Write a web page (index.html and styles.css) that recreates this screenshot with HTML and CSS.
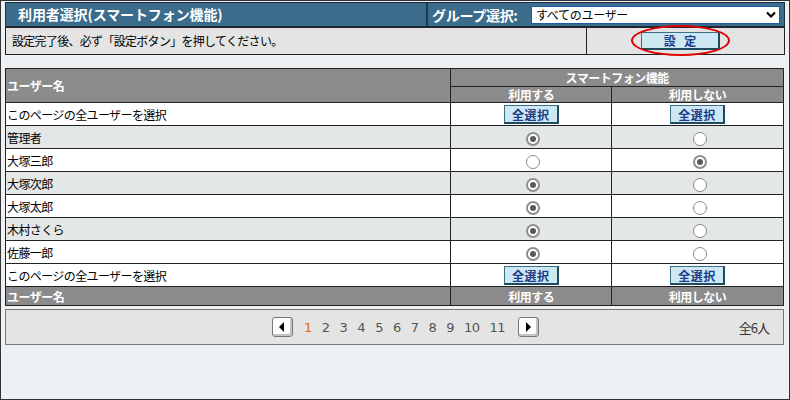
FILE: index.html
```html
<!DOCTYPE html>
<html lang="ja">
<head>
<meta charset="utf-8">
<link rel="stylesheet" href="styles.css">
</head>
<body>
<div class="page">
  <div class="titlebar">
    <div class="title">利用者選択(スマートフォン機能)</div>
    <div class="group">
      <span class="group-label">グループ選択:</span>
      <div class="select">
        <span>すべてのユーザー</span>
        <svg width="10" height="8" viewBox="0 0 10 8"><path d="M1 1.5 L5 5.5 L9 1.5" fill="none" stroke="#000" stroke-width="2.2"/></svg>
      </div>
    </div>
  </div>
  <div class="notice">
    <div class="notice-text">設定完了後、必ず「設定ボタン」を押してください。</div>
    <div class="notice-btn">
      <span class="btn btn-set">設 定</span>
      <span class="ring"></span>
    </div>
  </div>

  <table class="users">
    <colgroup><col class="c1"><col class="c2"><col class="c3"></colgroup>
    <thead>
      <tr class="h1"><th rowspan="2" class="name-h">ユーザー名</th><th colspan="2">スマートフォン機能</th></tr>
      <tr class="h2"><th>利用する</th><th>利用しない</th></tr>
    </thead>
    <tbody>
      <tr class="white"><td>このページの全ユーザーを選択</td><td class="ctr"><span class="btn btn-all">全選択</span></td><td class="ctr"><span class="btn btn-all">全選択</span></td></tr>
      <tr class="gray"><td>管理者</td><td class="ctr"><span class="radio on"></span></td><td class="ctr"><span class="radio"></span></td></tr>
      <tr class="white"><td>大塚三郎</td><td class="ctr"><span class="radio"></span></td><td class="ctr"><span class="radio on"></span></td></tr>
      <tr class="gray"><td>大塚次郎</td><td class="ctr"><span class="radio on"></span></td><td class="ctr"><span class="radio"></span></td></tr>
      <tr class="white"><td>大塚太郎</td><td class="ctr"><span class="radio on"></span></td><td class="ctr"><span class="radio"></span></td></tr>
      <tr class="gray"><td>木村さくら</td><td class="ctr"><span class="radio on"></span></td><td class="ctr"><span class="radio"></span></td></tr>
      <tr class="white"><td>佐藤一郎</td><td class="ctr"><span class="radio on"></span></td><td class="ctr"><span class="radio"></span></td></tr>
      <tr class="white"><td>このページの全ユーザーを選択</td><td class="ctr"><span class="btn btn-all">全選択</span></td><td class="ctr"><span class="btn btn-all">全選択</span></td></tr>
    </tbody>
    <tfoot>
      <tr class="f"><th class="name-h">ユーザー名</th><th>利用する</th><th>利用しない</th></tr>
    </tfoot>
  </table>

  <div class="pager">
    <div class="pages">
      <span class="pbtn"><svg width="8" height="10" viewBox="0 0 8 10"><path d="M6 0 L6 10 L1 5 Z" fill="#000"/></svg></span>
      <span class="num cur">1</span>
      <span class="num">2</span>
      <span class="num">3</span>
      <span class="num">4</span>
      <span class="num">5</span>
      <span class="num">6</span>
      <span class="num">7</span>
      <span class="num">8</span>
      <span class="num">9</span>
      <span class="num">10</span>
      <span class="num">11</span>
      <span class="pbtn"><svg width="8" height="10" viewBox="0 0 8 10"><path d="M2 0 L2 10 L7 5 Z" fill="#000"/></svg></span>
    </div>
    <div class="total">全6人</div>
  </div>
</div>
</body>
</html>
```
FILE: styles.css
```css
* { box-sizing: border-box; }
html, body { margin: 0; padding: 0; }
body {
  width: 790px;
  height: 400px;
  font-family: "Noto Sans CJK JP", "Liberation Sans", sans-serif;
  font-size: 12px;
  color: #000;
  background: #edf1f4;
}
.page {
  width: 790px;
  height: 400px;
  border: 1px solid #333;
  padding: 1px 4px 0 4px;
  display: flex;
  flex-direction: column;
}
.titlebar {
  height: 25px;
  display: flex;
  background: #3b6c8c;
  border: 1px solid #1b2c3b;
  color: #fff;
  font-weight: bold;
  font-size: 14px;
}
.title {
  width: 422px;
  padding-left: 12px;
  line-height: 22px;
  letter-spacing: -0.1px;
  border-right: 2px solid #1d3a4f;
}
.group {
  flex: 1;
  display: flex;
  align-items: center;
  padding-left: 4px;
}
.group-label {
  width: 99px;
  letter-spacing: -0.3px;
  line-height: 22px;
}
.select {
  width: 249px;
  height: 18px;
  background: #fff;
  border: 1px solid #1f5aa8;
  color: #000;
  font-weight: normal;
  font-size: 12px;
  display: flex;
  align-items: center;
  justify-content: space-between;
  padding: 0 3px 0 4px;
  letter-spacing: -0.3px;
}
.notice {
  height: 28px;
  display: flex;
  background: #e4e4e4;
  border: 1px solid #222;
}
.notice-text {
  width: 581px;
  padding-left: 6px;
  line-height: 26px;
  letter-spacing: -0.7px;
  border-right: 1px solid #222;
}
.notice-btn {
  flex: 1;
  display: flex;
  align-items: center;
  justify-content: center;
  position: relative;
  padding-right: 10px;
}
.btn {
  display: inline-flex;
  align-items: center;
  justify-content: center;
  background: #cde8f3;
  color: #1a3c8c;
  font-weight: bold;
  border: 1px solid #3a6f86;
  border-right: 2px solid #1f4a5e;
  border-bottom: 2px solid #1f4a5e;
}
.btn-set {
  width: 79px;
  height: 18px;
  font-size: 12px;
  letter-spacing: 3px;
  padding-left: 3px;
}
.ring {
  position: absolute;
  left: 44px;
  top: -3px;
  width: 99px;
  height: 31px;
  border: 2px solid #e00000;
  border-radius: 50%;
}
.users {
  margin-top: 13px;
  width: 779px;
  border-collapse: collapse;
  border: 1px solid #222;
  font-size: 12px;
}
.users col.c1 { width: 446px; }
.users col.c2 { width: 161px; }
.users col.c3 { width: 172px; }
.users th {
  background: #8b8b8b;
  color: #fff;
  font-weight: bold;
  border: 1px solid #222;
  padding: 0;
  letter-spacing: -0.5px;
}
.users th.name-h { text-align: left; padding-left: 1px; }
.users .h1 th { height: 18px; line-height: 15px; }
.users .h2 th { height: 16px; line-height: 14px; }
.users .f th { height: 19px; line-height: 15px; }
.users td {
  height: 23px;
  border: 1px solid #222;
  padding: 0 0 0 1px;
  letter-spacing: -0.6px;
}
.users td.ctr { text-align: center; padding: 0; }
.users tr.white td { background: #fff; }
.users tr.gray td { background: #e3e7e7; }
.btn-all {
  width: 55px;
  height: 19px;
  font-size: 12px;
  letter-spacing: 0.5px;
  vertical-align: middle;
}
.radio {
  display: inline-block;
  width: 14px;
  height: 14px;
  border-radius: 50%;
  border: 1px solid #8a8a8a;
  background: #fff;
  vertical-align: middle;
  margin-left: 4px;
  position: relative;
}
.radio.on {
  background: #fff;
  border: 2px solid #8f8f8f;
}
.radio.on::after {
  content: "";
  position: absolute;
  left: 2px;
  top: 2px;
  width: 6px;
  height: 6px;
  border-radius: 50%;
  background: #5a5a5a;
}
.pager {
  margin-top: 3px;
  height: 36px;
  width: 779px;
  background: #e4e4e4;
  border: 1px solid #777;
  display: flex;
  align-items: center;
  position: relative;
}
.pages {
  display: flex;
  align-items: center;
  margin-left: 266px;
  font-family: "DejaVu Sans", "Liberation Sans", sans-serif;
  font-size: 13px;
  color: #555;
}
.pbtn {
  width: 21px;
  height: 20px;
  border: 1px solid #777;
  border-radius: 3px;
  background: #fff;
  box-shadow: inset -2px -2px 0 #c4c4c4;
  display: inline-flex;
  align-items: center;
  justify-content: center;
  padding: 0 1px 1px 0;
}
.num {
  margin-left: 10px;
  letter-spacing: -0.5px;
}
.num.cur { color: #e26a10; margin-left: 11px; }
.num + .pbtn { margin-left: 13px; }
.total {
  margin-left: auto;
  margin-right: 14px;
  font-size: 13px;
  color: #333;
  letter-spacing: -1px;
}
```
